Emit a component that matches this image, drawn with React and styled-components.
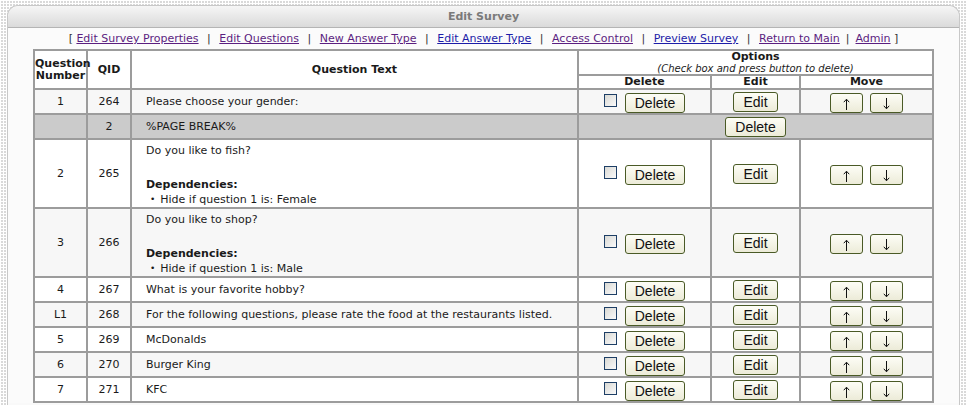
import React from 'react';
import styled, { createGlobalStyle } from 'styled-components';

const GlobalStyle = createGlobalStyle`
  html, body {
    margin: 0;
    padding: 0;
    height: 100%;
    overflow: hidden;
  }
  body {
    font-family: "DejaVu Sans", Verdana, sans-serif;
    font-size: 11px;
    color: #1a1a1a;
    background-color: #d9d9d9;
    background-image:
      linear-gradient(90deg, #fff 1px, transparent 1px),
      linear-gradient(#fff 1px, transparent 1px);
    background-size: 3px 3px;
  }
`;

const Page = styled.div`
  padding: 5px 7px 0 7px;
`;

const Panel = styled.div`
  background: #f9f9f9;
  border: 1px solid #c8c8c8;
  border-bottom: none;
  border-radius: 11px 11px 0 0;
  height: 420px;
  overflow: hidden;
`;

const PanelTitle = styled.div`
  height: 21px;
  line-height: 22px;
  text-align: center;
  font-weight: bold;
  font-size: 11px;
  color: #7a7a7a;
  background: linear-gradient(#f6f6f6, #dadada);
  border-bottom: 1px solid #b4b4b4;
  border-radius: 10px 10px 0 0;
`;

const Body = styled.div`
  display: flex;
  flex-direction: column;
  align-items: center;
  padding-top: 2px;
  background: #fbfbfb;
`;

const Nav = styled.div`
  height: 17px;
  line-height: 17px;
  font-size: 11px;
  color: #333;
`;

const NavLink = styled.a`
  color: ${p => (p.visited ? '#5b1e80' : '#1c1ca8')};
  text-decoration: underline;
`;

const Sep = styled.span`
  padding: 0 ${p => p.pad ?? 8.5}px;
`;

const Table = styled.table`
  border-collapse: collapse;
  width: 899px;
  margin-top: 2px;
  table-layout: fixed;
  border: 2px solid #9c9c9c;
`;

const Th = styled.th`
  border: 2px solid #9c9c9c;
  background: #fff;
  font-size: 11px;
  font-weight: bold;
  text-align: center;
  vertical-align: middle;
  padding: 0;
  line-height: 12px;
  height: ${p => p.h || 'auto'};
`;

const Hint = styled.div`
  font-weight: normal;
  font-style: italic;
  font-size: 10px;
  line-height: 11px;
`;

const Row = styled.tr`
  background: ${p => (p.pagebreak ? '#cbcbcb' : p.alt ? '#f7f7f7' : '#fff')};
`;

const Td = styled.td`
  border: 2px solid #9c9c9c;
  padding: 0;
  height: ${p => p.h || 23}px;
  text-align: ${p => p.align || 'center'};
  vertical-align: middle;
  font-size: 11px;
`;

const QText = styled.div`
  padding-left: 14px;
  line-height: 17px;
`;

const DepBlock = styled(QText)`
  padding-top: 2px;
`;

const DepTitle = styled.div`
  font-weight: bold;
  margin-top: 17px;
`;

const DepList = styled.ul`
  margin: 0;
  padding: 0 0 0 4px;
  list-style: none;
  line-height: 13px;
  li::before {
    content: '•';
    font-size: 9px;
    margin-right: 5px;
    position: relative;
    top: -1px;
  }
`;

const Cell = styled.div`
  display: flex;
  align-items: center;
  justify-content: center;
  gap: ${p => p.gap || 8}px;
`;

const Check = styled.span`
  display: inline-block;
  width: 11px;
  height: 11px;
  border: 1px solid #1e3f66;
  background: linear-gradient(135deg, #d9d9d4, #fafafa);
  margin-top: -3px;
`;

const Button = styled.button`
  display: inline-flex;
  align-items: center;
  justify-content: center;
  font-family: "Liberation Sans", Arial, sans-serif;
  font-size: 14px;
  height: 20px;
  min-width: ${p => p.w || 0}px;
  padding: 0 ${p => p.pad ?? 9}px;
  margin-top: ${p => p.mt ?? 1}px;
  line-height: 18px;
  color: #111;
  background: linear-gradient(#fdfdf6, #ecebd8);
  border: 1px solid #4a5a26;
  border-radius: 3px;
  cursor: pointer;
`;

function Arrow({ down }) {
  return (
    <svg width="7" height="12" viewBox="0 0 7 12" style={{ marginTop: 3 }}>
      <g transform={down ? 'rotate(180 3.5 6)' : undefined} stroke="#111" strokeWidth="1" fill="none">
        <line x1="3.5" y1="1.5" x2="3.5" y2="12" />
        <path d="M0.8 4.2 L3.5 1.2 L6.2 4.2" />
      </g>
    </svg>
  );
}

const questions = [
  { num: '1', qid: '264', text: 'Please choose your gender:' },
  { pagebreak: true, qid: '2', text: '%PAGE BREAK%' },
  { num: '2', qid: '265', text: 'Do you like to fish?', dep: 'Hide if question 1 is: Female' },
  { num: '3', qid: '266', text: 'Do you like to shop?', dep: 'Hide if question 1 is: Male' },
  { num: '4', qid: '267', text: 'What is your favorite hobby?' },
  { num: 'L1', qid: '268', text: 'For the following questions, please rate the food at the restaurants listed.' },
  { num: '5', qid: '269', text: 'McDonalds' },
  { num: '6', qid: '270', text: 'Burger King' },
  { num: '7', qid: '271', text: 'KFC' },
];

const links = [
  ['Edit Survey Properties', true],
  ['Edit Questions', true],
  ['New Answer Type', true],
  ['Edit Answer Type', false],
  ['Access Control', true],
  ['Preview Survey', false],
  ['Return to Main', true],
  ['Admin', true],
];

function QuestionRow({ q, alt }) {
  if (q.pagebreak) {
    return (
      <Row pagebreak>
        <Td />
        <Td>{q.qid}</Td>
        <Td align="left"><QText>{q.text}</QText></Td>
        <Td colSpan={3}>
          <Cell><Button mt={0}>Delete</Button></Cell>
        </Td>
      </Row>
    );
  }
  const h = q.dep ? 65 : 23;
  return (
    <Row alt={alt}>
      <Td h={h}>{q.num}</Td>
      <Td h={h}>{q.qid}</Td>
      <Td h={h} align="left">
        {q.dep ? (
          <DepBlock>
            <div>{q.text}</div>
            <DepTitle>Dependencies:</DepTitle>
            <DepList><li>{q.dep}</li></DepList>
          </DepBlock>
        ) : (
          <QText>{q.text}</QText>
        )}
      </Td>
      <Td h={h}>
        <Cell>
          <Check />
          <Button mt={2}>Delete</Button>
        </Cell>
      </Td>
      <Td h={h}>
        <Cell><Button>Edit</Button></Cell>
      </Td>
      <Td h={h}>
        <Cell gap={7}>
          <Button mt={2} w={33}><Arrow /></Button>
          <Button mt={2} w={33}><Arrow down /></Button>
        </Cell>
      </Td>
    </Row>
  );
}

export default function App() {
  let stripe = 0;
  return (
    <>
      <GlobalStyle />
      <Page>
        <Panel>
          <PanelTitle>Edit Survey</PanelTitle>
          <Body>
            <Nav>
              [{' '}
              {links.map(([label, visited], i) => (
                <React.Fragment key={label}>
                  <NavLink href="#" visited={visited ? 1 : 0}>{label}</NavLink>
                  {i < links.length - 1 && <Sep pad={i === links.length - 2 ? 6 : 8.5}>|</Sep>}
                </React.Fragment>
              ))}
              {' '}]
            </Nav>
            <Table>
              <colgroup>
                <col style={{ width: 53 }} />
                <col style={{ width: 44 }} />
                <col style={{ width: 447 }} />
                <col style={{ width: 133 }} />
                <col style={{ width: 89 }} />
                <col style={{ width: 133 }} />
              </colgroup>
              <thead>
                <tr>
                  <Th rowSpan={2}>Question<br />Number</Th>
                  <Th rowSpan={2}>QID</Th>
                  <Th rowSpan={2}>Question Text</Th>
                  <Th colSpan={3} h="23px">
                    Options
                    <Hint>(Check box and press button to delete)</Hint>
                  </Th>
                </tr>
                <tr>
                  <Th h="12px">Delete</Th>
                  <Th h="12px">Edit</Th>
                  <Th h="12px">Move</Th>
                </tr>
              </thead>
              <tbody>
                {questions.map((q, i) => {
                  const alt = !q.pagebreak && stripe++ % 2 === 0;
                  return <QuestionRow key={i} q={q} alt={alt} />;
                })}
              </tbody>
            </Table>
          </Body>
        </Panel>
      </Page>
    </>
  );
}
